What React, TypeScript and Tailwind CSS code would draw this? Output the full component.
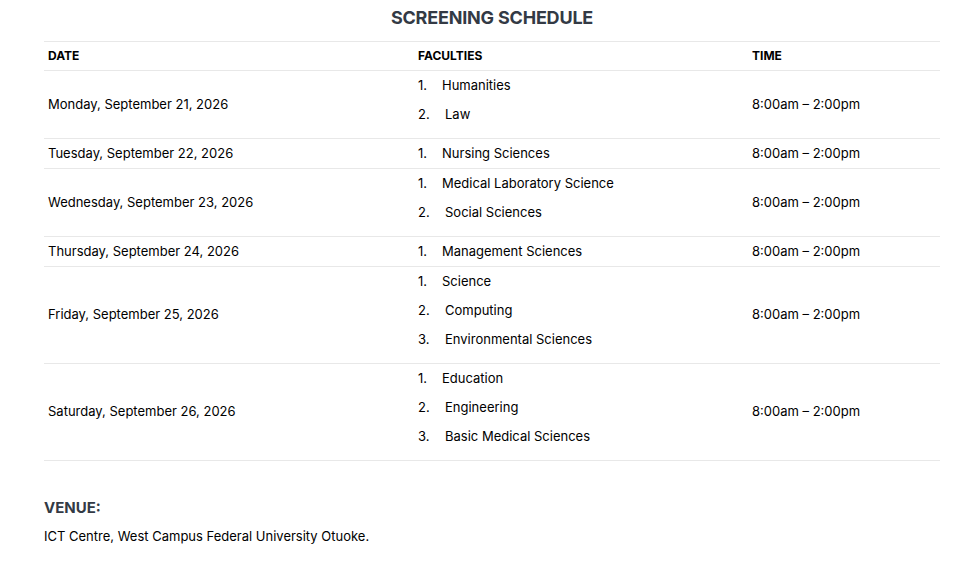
const rows: [string, string[]][] = [
  ["Monday, September 21, 2026", ["Humanities", "Law"]],
  ["Tuesday, September 22, 2026", ["Nursing Sciences"]],
  ["Wednesday, September 23, 2026", ["Medical Laboratory Science", "Social Sciences"]],
  ["Thursday, September 24, 2026", ["Management Sciences"]],
  ["Friday, September 25, 2026", ["Science", "Computing", "Environmental Sciences"]],
  ["Saturday, September 26, 2026", ["Education", "Engineering", "Basic Medical Sciences"]],
];

export default function App() {
  return (
    <div className="w-[962px] h-[578px] bg-white text-black" style={{ fontFamily: "Inter, 'Open Sans', sans-serif" }}>
      <div className="px-[44px] pr-[22px]">
        <h1 className="text-center text-[18px] font-bold text-[#333a45] leading-[22px] pt-[7px] pb-[12px] tracking-[-0.2px]">SCREENING SCHEDULE</h1>
        <div className="border-t border-[#e8e8e8]">
          <div className="flex h-[29px] items-center border-b border-[#e8e8e8] text-[12px] font-bold">
            <div className="w-[374px] pl-[4px]">DATE</div>
            <div className="w-[334px]">FACULTIES</div>
            <div>TIME</div>
          </div>
          {rows.map(([d, fs]) => (
            <div key={d} className="flex items-center border-b border-[#e8e8e8] text-[13px]">
              <div className="w-[374px] pl-[4px]">{d}</div>
              <ol className={`w-[334px] pt-[6px] ${fs.length > 1 ? "pb-[16px]" : "pb-[7px]"} flex flex-col gap-[13px]`}>
                {fs.map((f, i) => (
                  <li key={f} className="flex leading-[16px]">
                    <span className="w-[24px]">{i + 1}.</span>
                    <span className={i > 0 ? "pl-[3px]" : ""}>{f}</span>
                  </li>
                ))}
              </ol>
              <div>8:00am – 2:00pm</div>
            </div>
          ))}
        </div>
        <h2 className="mt-[37px] text-[15px] font-bold text-[#333a45] leading-[20px]">VENUE:</h2>
        <p className="mt-[9px] text-[13px]">ICT Centre, West Campus Federal University Otuoke.</p>
      </div>
    </div>
  );
}
